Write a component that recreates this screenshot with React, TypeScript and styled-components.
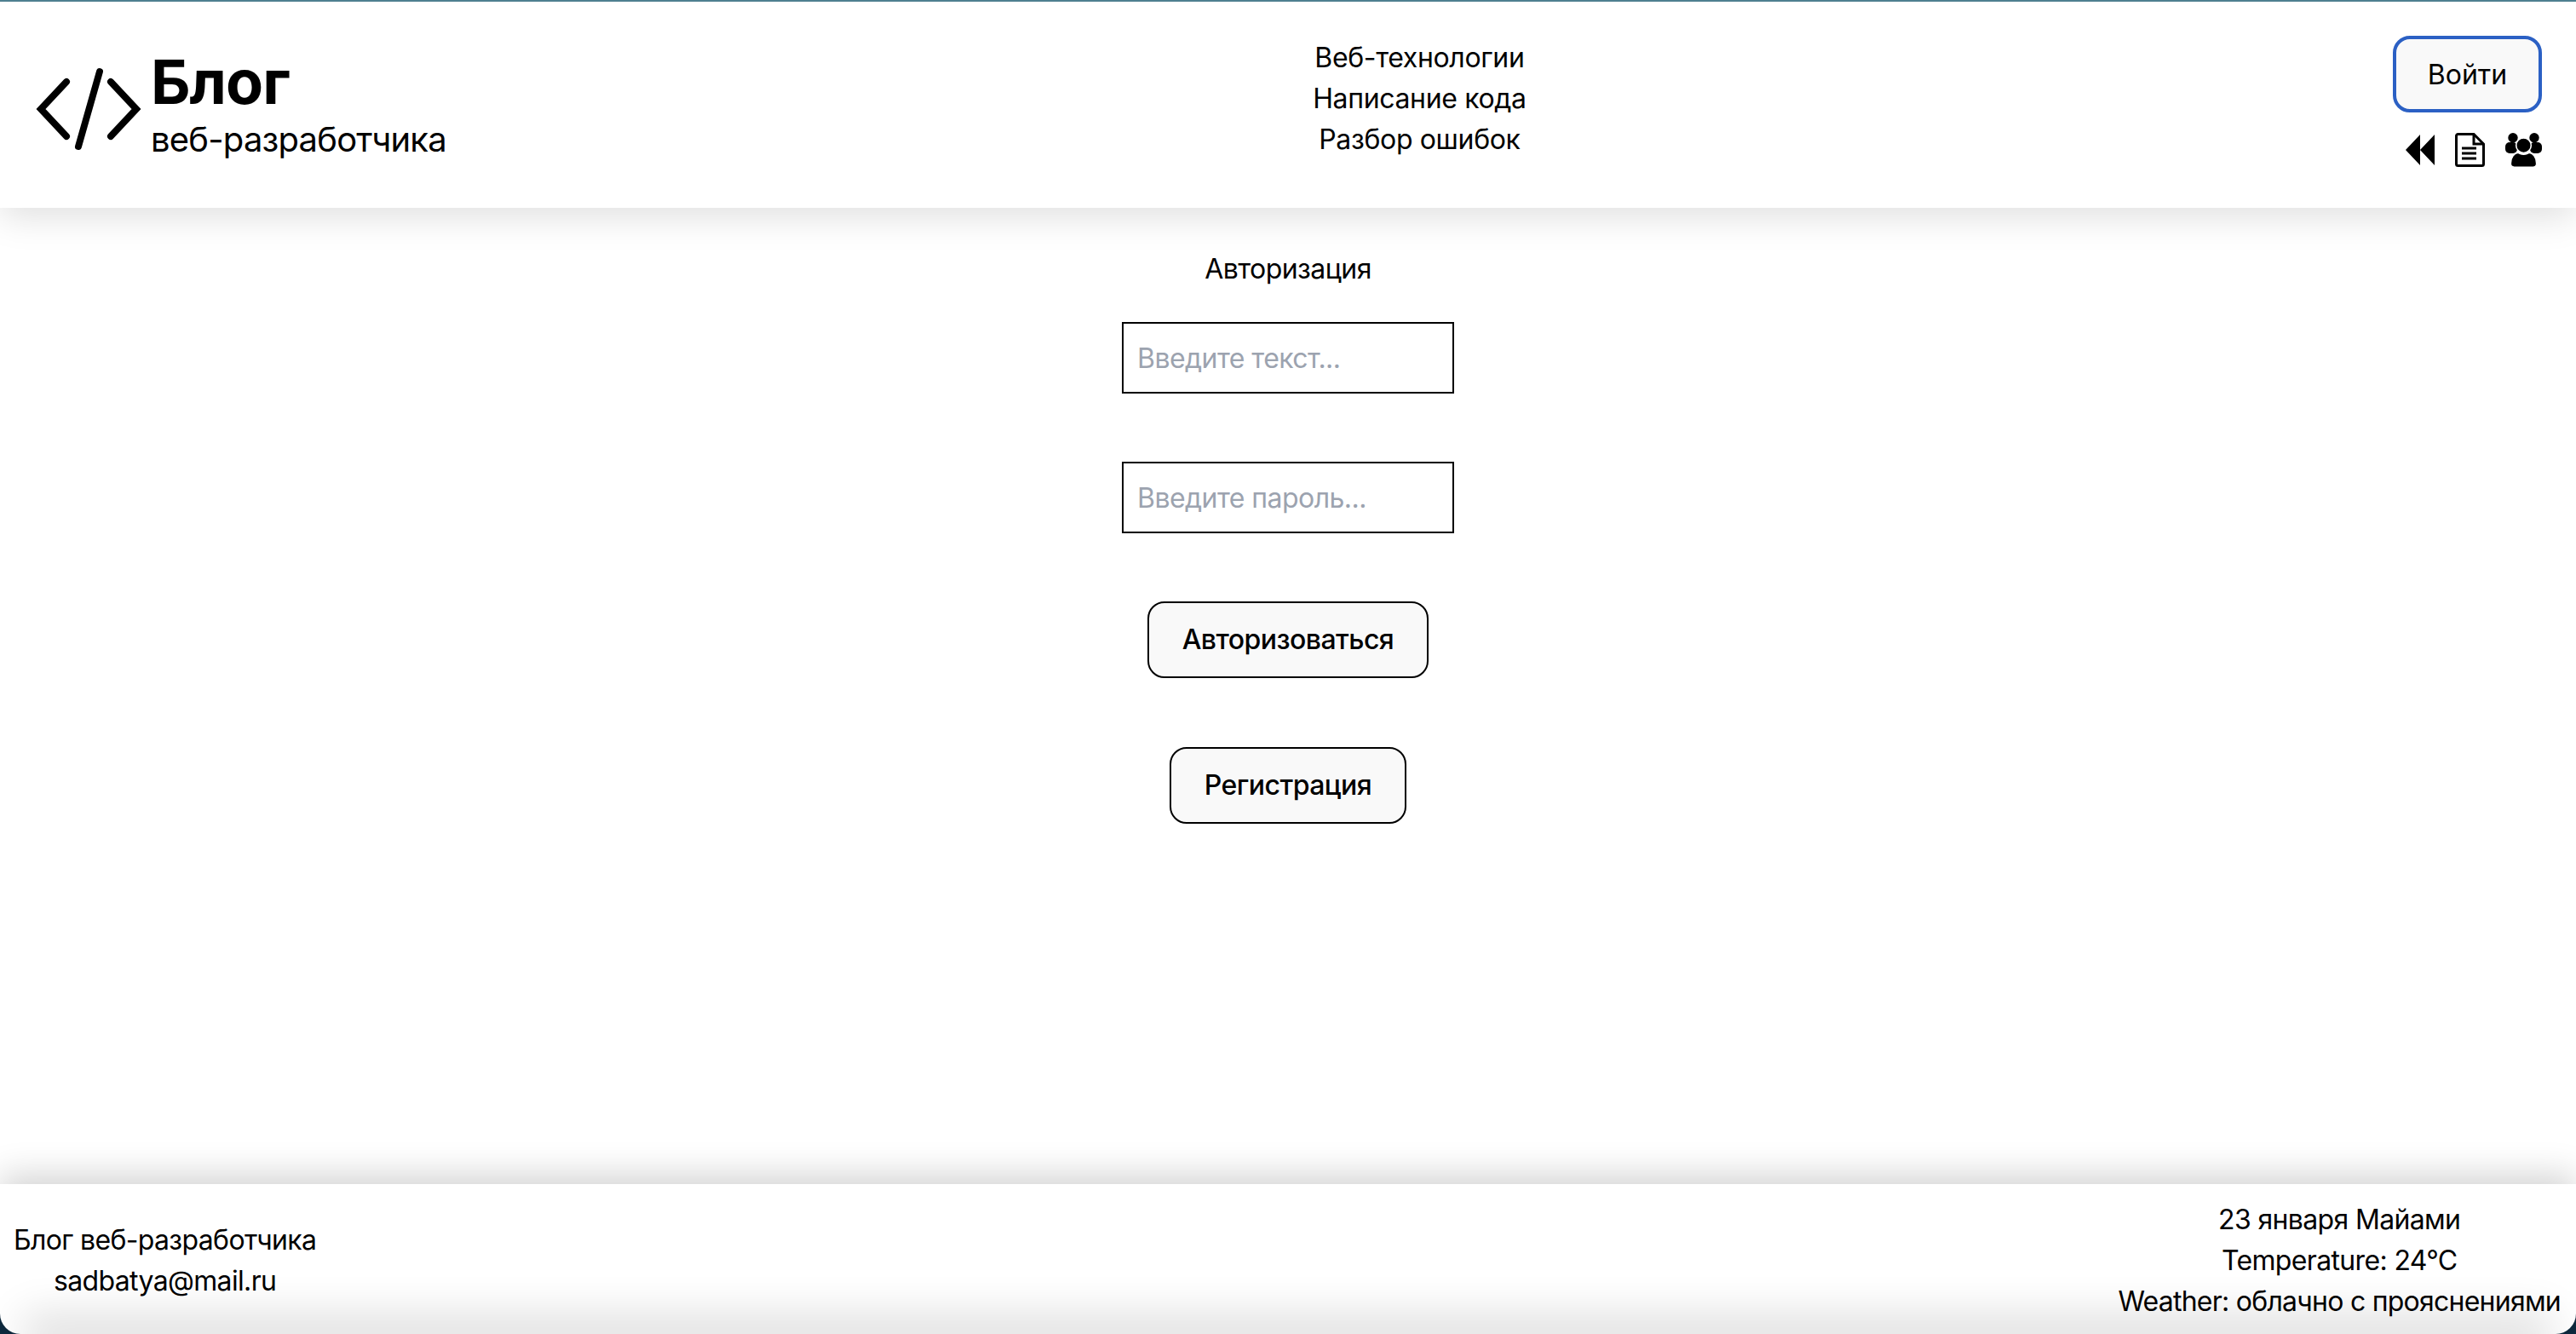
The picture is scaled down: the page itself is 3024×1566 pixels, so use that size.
import React from 'react';
import styled, { createGlobalStyle } from 'styled-components';

const GlobalStyle = createGlobalStyle`
	html, body {
		margin: 0;
		padding: 0;
		background: #fff;
	}
	body {
		font-family: Inter, "Liberation Sans", sans-serif;
		font-size: 32px;
		line-height: 48px;
		color: #000;
	}
	* {
		box-sizing: border-box;
	}
`;

const Page = styled.div`
	height: 1566px;
	display: flex;
	flex-direction: column;
	overflow: hidden;
	background: #0e2a3f;
	border-top: 2px solid #4f8090;
`;

const Header = styled.header`
	height: 242px;
	flex: none;
	display: flex;
	align-items: flex-start;
	justify-content: space-between;
	padding: 0 40px;
	background: #fff;
	box-shadow: 0 10px 40px rgba(0, 0, 0, 0.13);
	position: relative;
`;

const Brand = styled.div`
	display: flex;
	align-items: center;
	gap: 7px;
	padding-top: 54px;
`;

const LogoMark = styled.svg`
	flex: none;
	margin-top: 8px;
`;

const BrandText = styled.div`
	display: flex;
	flex-direction: column;
`;

const BrandTitle = styled.div`
	font-size: 72px;
	line-height: 80px;
	font-weight: 700;
	letter-spacing: -1px;
`;

const BrandSub = styled.div`
	font-size: 40px;
	line-height: 56px;
	letter-spacing: -0.8px;
`;

const Nav = styled.nav`
	display: flex;
	flex-direction: column;
	align-items: center;
	padding-top: 42px;
	letter-spacing: -0.35px;
`;

const Actions = styled.div`
	display: flex;
	flex-direction: column;
	align-items: flex-end;
	padding-top: 40px;
`;

const LoginButton = styled.button`
	width: 175px;
	height: 90px;
	padding: 2px 0 0;
	font: inherit;
	color: #000;
	background: #f9f9f9;
	border: 4px solid #2b60c4;
	border-radius: 20px;
`;

const IconRow = styled.div`
	display: flex;
	align-items: center;
	gap: 24px;
	margin-top: 24px;
`;

const Main = styled.main`
	flex: 1;
	display: flex;
	flex-direction: column;
	align-items: center;
	padding-top: 48px;
	background: #fff;
	letter-spacing: -0.55px;
`;

const FormTitle = styled.div`
	margin-bottom: 38px;
`;

const Field = styled.input`
	display: block;
	width: 390px;
	height: 84px;
	padding: 0 16px;
	margin-bottom: 80px;
	font: inherit;
	letter-spacing: inherit;
	color: #000;
	background: #fff;
	border: 2px solid #000;
	border-radius: 0;
	outline: none;

	&::placeholder {
		color: #9ca3af;
		opacity: 1;
	}
`;

const FormButton = styled.button`
	height: 90px;
	padding: 0 39px;
	margin-bottom: 81px;
	font: inherit;
	font-weight: 500;
	letter-spacing: inherit;
	color: #000;
	background: #f9f9f9;
	border: 2px solid #000;
	border-radius: 20px;
`;

const Footer = styled.footer`
	height: 176px;
	flex: none;
	display: flex;
	justify-content: space-between;
	align-items: flex-start;
	background: #fff;
	position: relative;
	overflow: hidden;
	border-radius: 0 0 24px 24px;
	box-shadow: 0 -10px 40px rgba(0, 0, 0, 0.18);
	padding: 0 18px 0 16px;
	letter-spacing: -0.65px;

	&::after {
		content: '';
		position: absolute;
		left: 50px;
		right: 50px;
		bottom: 0;
		height: 0;
		box-shadow: 0 0 50px 22px rgba(0, 0, 0, 0.14);
	}
`;

const FooterLeft = styled.div`
	display: flex;
	flex-direction: column;
	align-items: center;
	padding-top: 42px;
`;

const FooterRight = styled.div`
	display: flex;
	flex-direction: column;
	align-items: center;
	padding-top: 18px;
`;

const WeatherLine = styled.span`
	letter-spacing: -0.75px;
`;

const CodeLogo = () => (
	<LogoMark width="130" height="100" viewBox="40 78 130 100" fill="none" stroke="#000" strokeWidth="8" strokeLinecap="round" strokeLinejoin="miter">
		<path d="M78 96 L48 128 L78 160" />
		<path d="M117 84 L92 172" />
		<path d="M130 96 L160 128 L130 160" />
	</LogoMark>
);

const RewindIcon = () => (
	<svg width="34" height="36" viewBox="0 0 34 36" fill="#000">
		<path d="M17 0V36L0 18Z M34 0V36L17 18Z" />
	</svg>
);

const DocIcon = () => (
	<svg width="35" height="40" viewBox="0 0 35 40" fill="none" stroke="#000" strokeWidth="3">
		<path d="M1.5 3.5a2 2 0 0 1 2-2h18.5l11.5 11.5v23.5a2 2 0 0 1-2 2H3.5a2 2 0 0 1-2-2Z" />
		<path d="M22 1.5v11.5h11.5" />
		<path d="M8 18h17M8 24h17M8 30h17" />
	</svg>
);

const UsersIcon = () => (
	<svg width="43" height="40" viewBox="0 0 43 40" fill="#000">
		<circle cx="9" cy="5.7" r="5.7" />
		<circle cx="34" cy="5.7" r="5.7" />
		<rect x="0" y="11" width="14" height="13" rx="5" />
		<rect x="29" y="11" width="14" height="13" rx="5" />
		<circle cx="21.5" cy="14.7" r="8.8" stroke="#fff" strokeWidth="1.6" />
		<path
			d="M6.5 36C6.5 28 11 24 15 23.5Q21.5 27.5 28 23.5C32 24 36.5 28 36.5 36Q36.5 40 32.5 40H10.5Q6.5 40 6.5 36Z"
			stroke="#fff"
			strokeWidth="1.2"
		/>
	</svg>
);

export default function App() {
	return (
		<Page>
			<GlobalStyle />
			<Header>
				<Brand>
					<CodeLogo />
					<BrandText>
						<BrandTitle>Блог</BrandTitle>
						<BrandSub>веб-разработчика</BrandSub>
					</BrandText>
				</Brand>
				<Nav>
					<span>Веб-технологии</span>
					<span>Написание кода</span>
					<span>Разбор ошибок</span>
				</Nav>
				<Actions>
					<LoginButton>Войти</LoginButton>
					<IconRow>
						<RewindIcon />
						<DocIcon />
						<UsersIcon />
					</IconRow>
				</Actions>
			</Header>
			<Main>
				<FormTitle>Авторизация</FormTitle>
				<Field placeholder="Введите текст..." />
				<Field placeholder="Введите пароль..." />
				<FormButton>Авторизоваться</FormButton>
				<FormButton>Регистрация</FormButton>
			</Main>
			<Footer>
				<FooterLeft>
					<span>Блог веб-разработчика</span>
					<span>sadbatya@mail.ru</span>
				</FooterLeft>
				<FooterRight>
					<span>23 января Майами</span>
					<span>Temperature: 24°C</span>
					<WeatherLine>Weather: облачно с прояснениями</WeatherLine>
				</FooterRight>
			</Footer>
		</Page>
	);
}
